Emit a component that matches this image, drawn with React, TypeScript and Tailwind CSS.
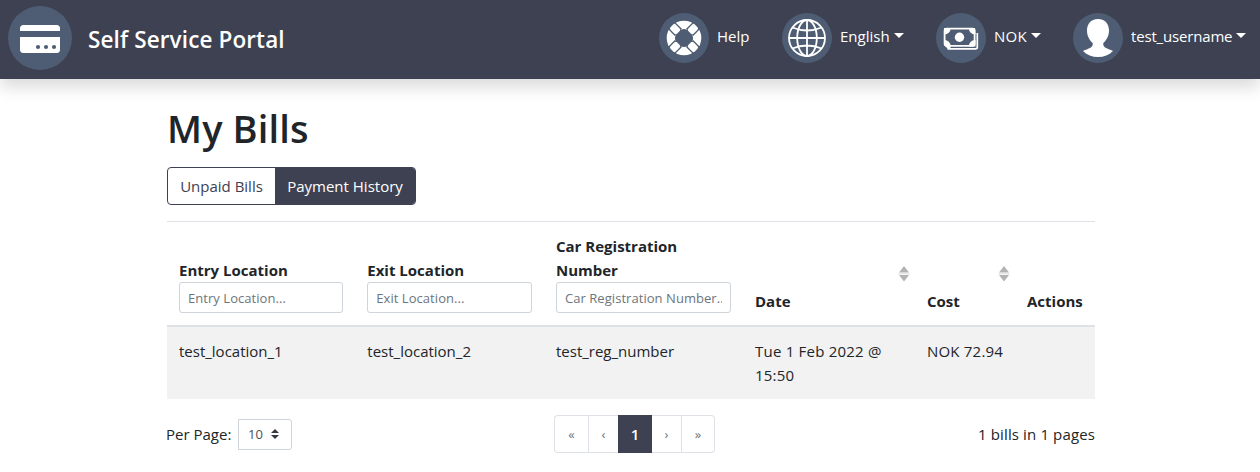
import React from "react";

function LogoIcon() {
  return (
    <svg width="64" height="64" viewBox="0 0 64 64" className="block shrink-0">
      <circle cx="32" cy="32" r="32" fill="#4e5d73" />
      <path d="M12 25v-2.500a3.500 3.500 0 0 1 3.500-3.500h33a3.500 3.500 0 0 1 3.500 3.500v2.500z" fill="#fff" />
      <path d="M12 31h40v12.500a3.500 3.500 0 0 1-3.500 3.500h-33a3.500 3.500 0 0 1-3.500-3.500z" fill="#fff" />
      <circle cx="30" cy="41" r="2.100" fill="#4e5d73" />
      <circle cx="38" cy="41" r="2.100" fill="#4e5d73" />
      <circle cx="46" cy="41" r="2.100" fill="#4e5d73" />
    </svg>
  );
}

function Disc({ children }: { children: React.ReactNode }) {
  return (
    <svg width="50" height="50" viewBox="0 0 50 50" className="block shrink-0">
      <circle cx="25" cy="25" r="25" fill="#4e5d73" />
      {children}
    </svg>
  );
}

function HelpIcon() {
  return (
    <Disc>
      <circle cx="25" cy="25" r="13.200" fill="none" stroke="#fff" strokeWidth="8.200" />
      {[45, 135, 225, 315].map((a) => (
        <g key={a} transform={`rotate(${a} 25 25)`}>
          <rect x="33" y="20" width="10.500" height="10" fill="#4e5d73" />
          <rect x="33" y="21.300" width="9.200" height="7.400" rx="1.800" fill="#fff" />
        </g>
      ))}
    </Disc>
  );
}

function GlobeIcon() {
  return (
    <Disc>
      <g fill="none" stroke="#fff" strokeWidth="1.800">
        <circle cx="25" cy="25" r="18" />
        <ellipse cx="25" cy="25" rx="9.800" ry="18" />
        <path d="M25 6.800v36.400M6.800 25h36.400M10.300 14.500q14.700 6 29.400 0M10.300 35.500q14.700-6 29.400 0" />
      </g>
    </Disc>
  );
}

function CashIcon() {
  return (
    <Disc>
      <path d="M11.500 35.800h28a1.800 1.800 0 0 0 1.800-1.800V20" fill="none" stroke="#fff" strokeWidth="1.700" />
      <rect x="8.600" y="15.600" width="30" height="17.200" rx="2" fill="none" stroke="#fff" strokeWidth="1.800" />
      <circle cx="23.500" cy="24.200" r="4.700" fill="#fff" />
      <path d="M8 15h6.500a6 6 0 0 1-6.500 6.500zM39 15h-6a6 6 0 0 0 6.500 6.500zM8 27a6 6 0 0 1 6.500 6v3h-2.500L8 32zM39.500 27a6 6 0 0 0-6.500 6.500h6.500z" fill="#fff" />
    </Disc>
  );
}

function UserIcon() {
  return (
    <Disc>
      <path d="M25 6c-7.500 0-11 5.500-11 11.500 0 5.500 2.600 9.800 5.700 12.500v2c-1.200 3.500-6.200 4-9.700 6C14 42 19 44 25 44s11-2 15-6c-3.500-2-8.500-2.500-9.700-6v-2c3.100-2.700 5.700-7 5.700-12.500C36 11.500 32.500 6 25 6z" fill="#fff" />
    </Disc>
  );
}

function NavItem({ icon, label, caret, className }: { icon: React.ReactNode; label: string; caret?: boolean; className: string }) {
  return (
    <a className={`flex h-[50px] shrink-0 items-center ${className}`}>
      {icon}
      <span className="ml-2 flex items-center whitespace-nowrap pb-[4px] leading-6">
        {label}
        {caret && (
          <span className="mb-[2px] ml-1 h-0 w-0 border-x-[5px] border-t-[5px] border-x-transparent border-t-white" />
        )}
      </span>
    </a>
  );
}

function SortArrows() {
  return (
    <svg width="12" height="16" viewBox="0 0 12 16" className="mb-[7px] ml-auto block">
      <path d="M6 0l5 6.500H1zM6 15.500l5-6.500H1z" fill="#b3b3b3" />
      <path d="M.5 7.700h11" stroke="#e8e8e8" strokeWidth="1.600" />
    </svg>
  );
}

function FilterHead({ title, placeholder }: { title: string; placeholder: string }) {
  return (
    <div className="flex flex-col justify-end px-3 pb-3">
      <div className="leading-6">{title}</div>
      <input
        placeholder={placeholder}
        className="block h-[31px] w-full rounded-[3px] border border-[#ced4da] bg-white px-2 text-[13px] font-normal tracking-[0.050px] placeholder:text-[#6c757d]"
      />
    </div>
  );
}

function SortHead({ title }: { title: string }) {
  return (
    <div className="flex flex-col justify-end pb-3 pl-3 pr-[5px]">
      <SortArrows />
      <div className="leading-6">{title}</div>
    </div>
  );
}

const COLUMNS = "grid grid-cols-[188.300px_188.700px_199px_172px_100px_80px]";

export default function App() {
  return (
    <div className="h-[472px] w-[1260px] overflow-hidden bg-white font-['Open_Sans',sans-serif] text-[15px] leading-6 text-[#212529]">
      <header className="flex h-[79px] items-start bg-[#3d4152] text-white shadow-[0_8px_16px_rgba(0,0,0,0.15)]">
        <div className="ml-2 mt-[6px] flex h-16 items-center">
          <LogoIcon />
          <span className="ml-4 pt-[3px] text-[22.500px] font-semibold tracking-[0.120px]">Self Service Portal</span>
        </div>
        <nav className="ml-auto mt-[13px] flex">
          <NavItem icon={<HelpIcon />} label="Help" className="w-[123px]" />
          <NavItem icon={<GlobeIcon />} label="English" caret className="w-[154px]" />
          <NavItem icon={<CashIcon />} label="NOK" caret className="w-[137px] tracking-[0.300px]" />
          <NavItem icon={<UserIcon />} label="test_username" caret className="w-[187px] tracking-[-0.170px]" />
        </nav>
      </header>

      <main className="ml-[167px] w-[928px]">
        <h1 className="pt-[25px] text-[38px] font-[550] leading-[48px] tracking-[0.120px]">My Bills</h1>
        <div className="mt-[15px] flex h-[38px] w-[249px] overflow-hidden rounded-[4px] border border-[#3d4152]">
          <button className="w-[107px] whitespace-nowrap text-[#3d4152]">Unpaid Bills</button>
          <button className="flex-1 whitespace-nowrap bg-[#3d4152] text-white">Payment History</button>
        </div>

        <section className="mt-4 border-t border-[#dee2e6]">
          <div className={`${COLUMNS} h-[105px] border-b-2 border-[#dee2e6] font-bold`}>
            <FilterHead title="Entry Location" placeholder="Entry Location..." />
            <FilterHead title="Exit Location" placeholder="Exit Location..." />
            <FilterHead title="Car Registration Number" placeholder="Car Registration Number..." />
            <SortHead title="Date" />
            <SortHead title="Cost" />
            <div className="flex items-end pb-3 pl-3">Actions</div>
          </div>
          <div className={`${COLUMNS} h-[72px] bg-[#f2f2f2]`}>
            <div className="px-3 pt-3">test_location_1</div>
            <div className="px-3 pt-3">test_location_2</div>
            <div className="px-3 pt-3">test_reg_number</div>
            <div className="px-3 pt-3 tracking-[0.220px]">Tue 1 Feb 2022 @ 15:50</div>
            <div className="whitespace-nowrap pl-3 pt-3 tracking-[0.200px]">NOK 72.94</div>
            <div />
          </div>
        </section>

        <footer className="mt-4 grid h-[38px] grid-cols-[387px_161px_1fr] items-center">
          <div className="flex items-center">
            <span className="-ml-px w-[72px] whitespace-nowrap">Per Page:</span>
            <div className="flex h-[31px] w-[54px] items-center rounded-r-[3px] border border-[#ced4da] pl-[9px] text-[13px] text-[#495057]">
              10
              <svg width="8" height="10" viewBox="0 0 8 10" className="ml-2">
                <path d="M4 0l4 4H0zM4 10l4-4H0z" fill="#343a40" />
              </svg>
            </div>
          </div>
          <div className="flex h-[38px] text-center leading-[36px] text-[#6c757d]">
            <span className="w-[34px] rounded-l-[4px] border border-r-0 border-[#dee2e6] text-[13px]">«</span>
            <span className="w-[30px] border border-r-0 border-[#dee2e6] text-[13px]">‹</span>
            <span className="w-[34px] bg-[#3d4152] font-semibold leading-[38px] text-white">1</span>
            <span className="w-[30px] border border-l-0 border-[#dee2e6] text-[13px]">›</span>
            <span className="w-[33px] rounded-r-[4px] border border-l-0 border-[#dee2e6] text-[13px]">»</span>
          </div>
          <div className="text-right tracking-[0.130px]">1 bills in 1 pages</div>
        </footer>
      </main>
    </div>
  );
}
